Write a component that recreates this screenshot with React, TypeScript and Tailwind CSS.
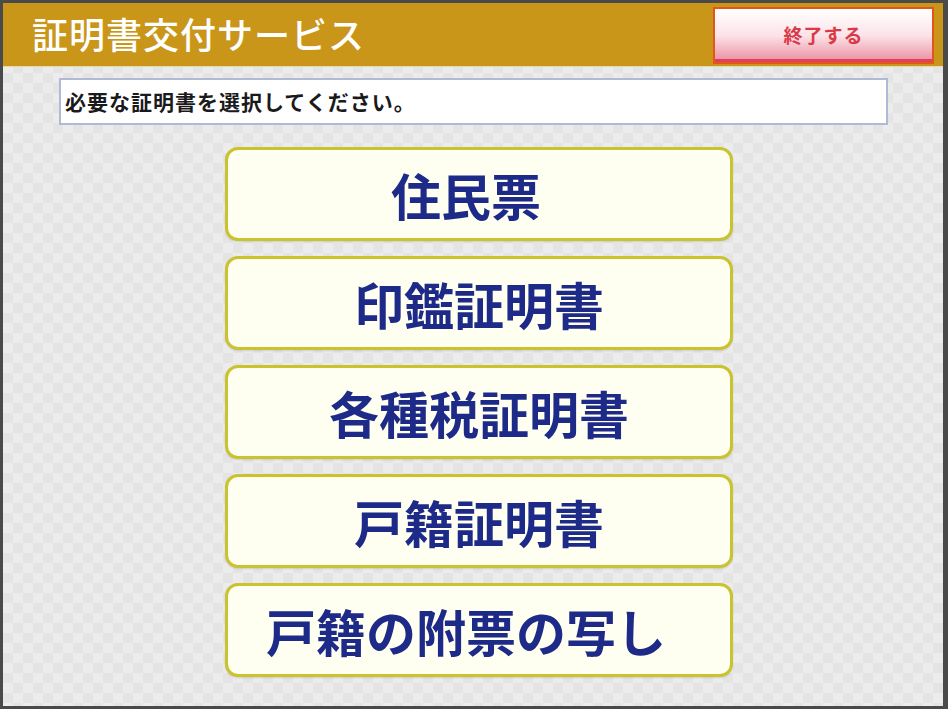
const ITEMS = [
  { label: '住民票', shift: 'pr-[26px]' },
  { label: '印鑑証明書', shift: '' },
  { label: '各種税証明書', shift: '' },
  { label: '戸籍証明書', shift: '' },
  { label: '戸籍の附票の写し', shift: 'pr-[26px]' },
];

const JP = "font-['Noto_Sans_CJK_JP','Noto_Sans',sans-serif]";

export default function App() {
  return (
    <div className={`w-[948px] h-[709px] bg-[#4a4a4a] pl-[3px] pt-[3px] pr-[5px] pb-[3px] ${JP}`}>
      <div className="flex h-full flex-col bg-[repeating-conic-gradient(#e4e4e4_0%_25%,#ececec_0%_50%)] bg-[length:20px_20px]">
        {/* Header */}
        <div className="flex h-[64px] shrink-0 items-start justify-between bg-[#c9961a] border-b border-[#e8d9a8]">
          <h1 className="pl-[29px] pt-[8px] text-[36px] leading-[44px] font-medium tracking-[1px] text-white">
            証明書交付サービス
          </h1>
          <button className="mr-[9px] mt-[4px] flex h-[57px] w-[221px] items-center justify-center border-2 border-[#e2561e] bg-gradient-to-b from-white via-[#fbe3e8] to-[#e88da0] shadow-[inset_0_-3px_0_#e0405a]">
            <span className="text-[19px] font-bold tracking-[1px] text-[#d83a48]">終了する</span>
          </button>
        </div>

        {/* Instruction */}
        <div className="mt-[11px] ml-[56px] mr-[55px] flex h-[47px] items-center border-2 border-[#aebad8] bg-white px-[4px]">
          <span className="text-[21px] font-bold tracking-[1px] text-[#1a1a1a]">必要な証明書を選択してください。</span>
        </div>

        {/* Certificate buttons */}
        <div className="mt-[22px] ml-[222px] flex w-[508px] flex-col gap-[15px]">
          {ITEMS.map(({ label, shift }) => (
            <button
              key={label}
              className={`flex h-[94px] items-center justify-center rounded-[13px] border-[3px] border-[#cbc230] bg-[#fefef1] shadow-[0_1px_2px_rgba(0,0,0,0.12)] ${shift}`}
            >
              <span className="text-[50px] font-bold leading-none text-[#1d2a88]">{label}</span>
            </button>
          ))}
        </div>
      </div>
    </div>
  );
}
